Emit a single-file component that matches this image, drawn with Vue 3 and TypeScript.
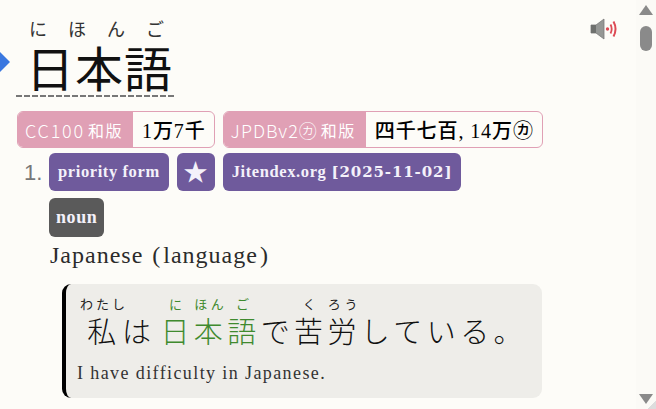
<script setup lang="ts">
const reading: string[] = ['に', 'ほ', 'ん', 'ご']
</script>

<template>
  <div class="page" lang="ja">
    <main class="content">
      <header class="head">
        <i class="arrow"></i>
        <div class="word">
          <div class="kana">
            <span v-for="k in reading" :key="k">{{ k }}</span>
          </div>
          <div class="kanji">日本語</div>
        </div>
        <svg class="audio" width="28" height="22" viewBox="0 0 28 22">
          <path d="M1 7h5l8-6v20l-8-6H1z" fill="#959795" stroke="#7a7a7a" stroke-width=".8" />
          <path d="M1 7h5v8H1z" fill="#6e706e" />
          <circle cx="17.5" cy="11" r="1.7" fill="#dd4b55" />
          <path d="M20.5 6.5c1.6 3 1.6 6 0 9" fill="none" stroke="#dd4b55" stroke-width="1.8" />
          <path d="M23.5 3.5c2.7 5 2.7 10 0 15" fill="none" stroke="#dd4b55" stroke-width="2" />
        </svg>
      </header>

      <div class="freqs">
        <div class="freq">
          <span class="freq-label cc">CC100<b>和版</b></span>
          <span class="freq-value">1万7千</span>
        </div>
        <div class="freq">
          <span class="freq-label">JPDBv2㋕<b>和版</b></span>
          <span class="freq-value">四千七百, 14万㋕</span>
        </div>
      </div>

      <div class="entry">
        <span class="num">1.</span>
        <div class="body">
          <div class="tags">
            <span class="tag">priority form</span>
            <span class="tag star">★</span>
            <span class="tag">Jitendex.org <span class="date">[2025-11-02]</span></span>
          </div>
          <span class="tag noun">noun</span>
          <p class="gloss">Japanese <span class="paren">(</span>language<span class="paren">)</span></p>
          <div class="example">
            <p class="jp">
              <ruby>私<rt>わたし</rt></ruby>は<span class="hit"><ruby>日<rt>に</rt></ruby><ruby>本<rt>ほん</rt></ruby><ruby>語<rt>ご</rt></ruby></span>で<ruby>苦<rt>く</rt></ruby><ruby>労<rt>ろう</rt></ruby>している。
            </p>
            <p class="en">I have difficulty in Japanese.</p>
          </div>
        </div>
      </div>
    </main>

    <aside class="scrollbar">
      <i class="up"></i>
      <i class="thumb"></i>
      <i class="down"></i>
      <i class="corner"></i>
    </aside>
  </div>
</template>

<style>
html, body { margin: 0; background: #fdfcf8; overflow: hidden; }
</style>

<style scoped>
.page {
  display: flex;
  width: 656px;
  height: 409px;
  overflow: hidden;
  background: #fdfcf8;
  font-family: "Liberation Serif", "Noto Sans CJK JP", serif;
  color: #222;
}
.content {
  flex: 1;
  min-width: 0;
  padding: 14px 0 0 17px;
}
.head {
  position: relative;
  height: 84px;
}
.arrow {
  position: absolute;
  left: -17px;
  top: 38px;
  border-left: 10px solid #3b78e0;
  border-top: 10px solid transparent;
  border-bottom: 10px solid transparent;
}
.word {
  width: 158px;
  height: 83px;
  margin-left: -1px;
  background: repeating-linear-gradient(90deg, #777 0 6px, transparent 6px 8px) bottom / 100% 2px no-repeat;
}
.kana {
  display: flex;
  gap: 21px;
  padding: 2px 0 0 13px;
  font: 18px/24px "Noto Sans CJK JP", sans-serif;
  color: #333;
}
.kanji {
  margin-left: 10px;
  font: 48px/53px "Noto Sans CJK JP", sans-serif;
  color: #111;
  letter-spacing: 1px;
  white-space: nowrap;
}
.audio {
  position: absolute;
  left: 573px;
  top: 4px;
}
.freqs {
  display: flex;
  gap: 8px;
  margin-top: 13px;
}
.freq {
  display: flex;
  height: 37px;
  box-sizing: border-box;
  border: 1px solid #e0a0b5;
  border-radius: 6px;
  overflow: hidden;
  background: #fdfcf8;
}
.freq-label {
  display: flex;
  align-items: center;
  padding: 0 10px 0 7px;
  background: #e0a0b5;
  color: #fff;
  font: 300 18px "Noto Sans CJK JP", sans-serif;
  letter-spacing: 1px;
  white-space: nowrap;
}
.cc { letter-spacing: 1.8px; }
.freq-label b { font-size: 16px; margin-left: 3px; letter-spacing: 1.5px; }
.freq-value {
  display: flex;
  align-items: center;
  padding: 0 8px 0 9px;
  color: #000;
  font: 500 20px "Liberation Serif", "Noto Sans CJK JP", serif;
  letter-spacing: .9px;
  white-space: nowrap;
}
.entry {
  display: flex;
  margin-top: 5px;
}
.num {
  width: 32px;
  padding: 7px 0 0 7px;
  box-sizing: border-box;
  font: 22px "Liberation Sans", sans-serif;
  color: #777;
}
.tags {
  display: flex;
  gap: 8px;
}
.tag {
  display: inline-flex;
  align-items: center;
  gap: 5px;
  height: 38px;
  box-sizing: border-box;
  padding: 0 9px;
  border-radius: 6px;
  background: #6f5a9c;
  color: #f4f1fa;
  font: bold 16.5px "Liberation Serif", serif;
  letter-spacing: .6px;
  white-space: nowrap;
}
.date {
  font: bold 15px "DejaVu Serif", serif;
  letter-spacing: .9px;
}
.star { width: 38px; justify-content: center; font-size: 23px; padding: 0; }
.noun {
  margin-top: 7px;
  height: 39px;
  background: #5a5a5a;
  padding: 0 7px;
  font-size: 18px;
}
.gloss {
  margin: 3px 0 0 1px;
  font-size: 24px;
  line-height: 30px;
  letter-spacing: 1px;
  color: #2b2b2b;
}
.paren { margin: 0 2px; }
.example {
  width: 480px;
  height: 114px;
  margin: 14px 0 0 13px;
  box-sizing: border-box;
  border-left: 4px solid #000;
  border-radius: 9px;
  background: #eeede9;
  padding: 19px 0 0 11px;
}
.jp {
  margin: 0;
  padding-left: 3px;
  font: 300 29px/48px "Noto Sans CJK JP", sans-serif;
  letter-spacing: 4.4px;
  color: #111;
  white-space: nowrap;
}
.jp rt {
  position: relative;
  top: -6px;
  font-size: 13px;
  font-weight: 400;
  line-height: 40px;
  letter-spacing: 3px;
  color: #222;
}
.hit { margin-left: 5px; }
.hit, .hit rt { color: #3f8a2e; }
.en {
  margin: 9px 0 0;
  font-size: 18px;
  letter-spacing: 1.4px;
  color: #333;
}
.scrollbar {
  position: relative;
  flex: 0 0 20px;
  background: #fbfaf6;
}
.scrollbar i { position: absolute; display: block; }
.up {
  top: 5px;
  left: 3px;
  border: 7px solid transparent;
  border-top: 0;
  border-bottom: 10px solid #8a8a8a;
}
.thumb {
  top: 26px;
  left: 4px;
  width: 12px;
  height: 25px;
  border-radius: 6px;
  background: #8a8a8a;
}
.down {
  bottom: 5px;
  left: 3px;
  border: 7px solid transparent;
  border-bottom: 0;
  border-top: 10px solid #8a8a8a;
}
.corner {
  right: 0;
  bottom: 0;
  width: 8px;
  height: 8px;
  background: linear-gradient(135deg, transparent 50%, #ddd 50%);
}
</style>
